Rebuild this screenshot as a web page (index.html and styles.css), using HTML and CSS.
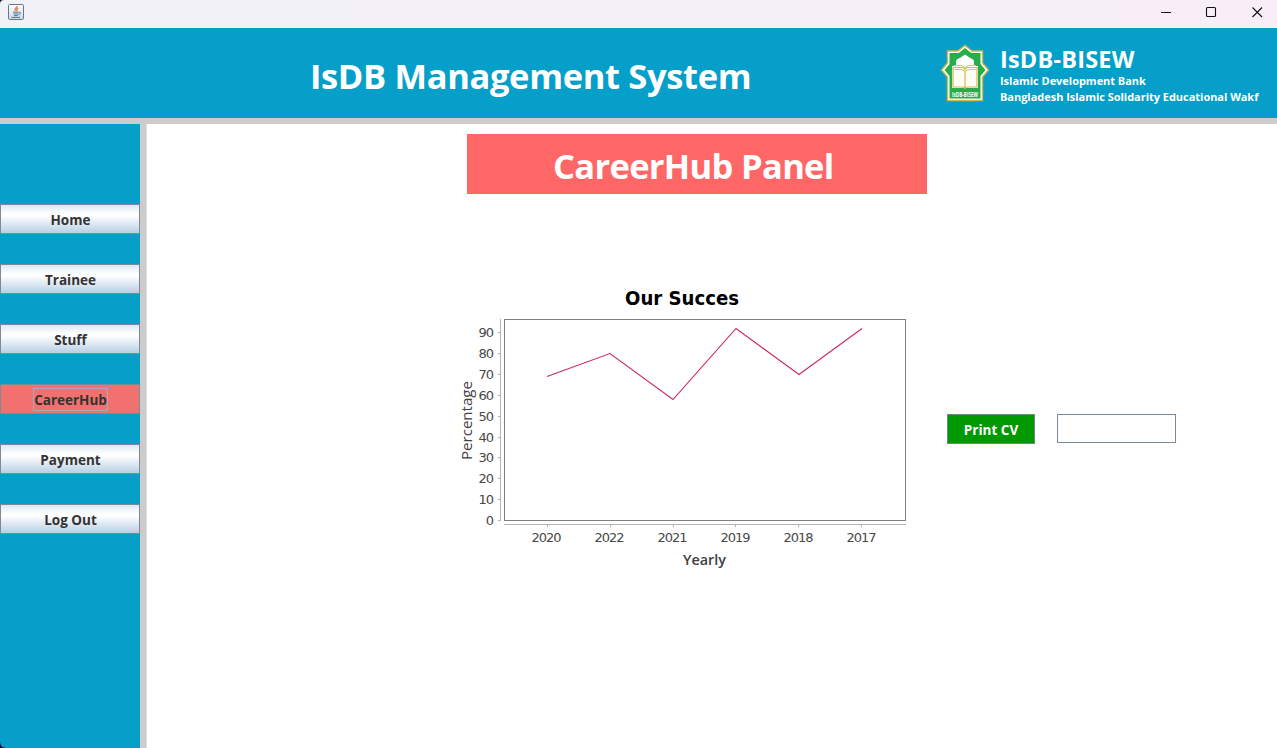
FILE: index.html
```html
<!DOCTYPE html>
<html lang="en">
<head>
<meta charset="utf-8">
<title>IsDB Management System</title>
<link rel="stylesheet" href="styles.css">
</head>
<body>
<div class="titlebar">
  <svg class="java" width="16" height="16" viewBox="0 0 16 16">
    <defs><linearGradient id="tile" x1="0" y1="0" x2="0" y2="1"><stop offset="0" stop-color="#fff"/><stop offset="1" stop-color="#cbd8e4"/></linearGradient></defs>
    <rect x=".5" y=".5" width="15" height="15" rx="1.2" fill="url(#tile)" stroke="#65798d"/>
    <path d="M9.2 1.8C9.5 3.7 5.8 4.2 7.2 6.8M10.2 4.2C8 5.2 8.4 5.8 8.8 7.2" fill="none" stroke="#e88445" stroke-width="1.4"/>
    <path d="M5 8.2h5.8M5.5 10h4.8M6 11.6h3.8M3.5 13.4h8.5M11 8.3c2.3-.3 1.8 2-.5 2.3" fill="none" stroke="#527696" stroke-width="1"/>
  </svg>
  <svg class="controls" width="104" height="12" viewBox="0 0 104 12">
    <path d="M0 6.5h10" stroke="#111" stroke-width="1"/>
    <rect x="45.5" y="1.5" width="9" height="9" rx="1" fill="none" stroke="#111" stroke-width="1.1"/>
    <path d="M91.5 1.5l9.5 9.5M101 1.5l-9.5 9.5" stroke="#111" stroke-width="1.1"/>
  </svg>
</div>
<header class="header">
  <h1 class="title">IsDB Management System</h1>
  <svg class="logo" width="50" height="60" viewBox="0 0 50 60">
    <path d="M25 1.5L32 7H42.5V19L48.5 26L42.5 33V56.5H7.5V33L1.5 26L7.5 19V7H18Z" fill="#fff" stroke="#cdbb49" stroke-width="1.4"/>
    <path d="M25 4L31.3 9H40.5V20L45.5 26L40.5 32V54.5H9.5V32L4.5 26L9.5 20V9H18.7Z" fill="#26ae4b"/>
    <path d="M16 22V18C16 14 20 15 22 12.5L25 10.5L28 12.5C30 15 34 14 34 18V22H38V44H12V22Z" fill="#fff"/>
    <path d="M13 23.5h10l2 1.5 2-1.5h10V43H27l-2 1.2-2-1.2H13ZM25 25v19" fill="#fffef5" stroke="#d8b655" stroke-width="1.2"/>
    <path d="M14 25.5h8l3 2 3-2h8M14 21.5h8l3 2 3-2h8" fill="none" stroke="#dfc368"/>
    <text class="logo-text" x="25" y="52.5" text-anchor="middle" textLength="26" lengthAdjust="spacingAndGlyphs">IsDB-BISEW</text>
  </svg>
  <div class="brand">
    <div class="brand-name">IsDB-BISEW</div>
    <div class="brand-line bank">Islamic Development Bank</div>
    <div class="brand-line">Bangladesh Islamic Solidarity Educational Wakf</div>
  </div>
</header>
<div class="body">
  <nav class="sidebar">
    <button class="nav"><span>Home</span></button>
    <button class="nav"><span>Trainee</span></button>
    <button class="nav"><span>Stuff</span></button>
    <button class="nav active"><span>CareerHub</span></button>
    <button class="nav"><span>Payment</span></button>
    <button class="nav"><span>Log Out</span></button>
  </nav>
  <main class="main">
    <h2 class="panel-title">CareerHub Panel</h2>
    <div class="content">
      <svg class="chart" width="460" height="300" viewBox="0 0 460 300">
        <text class="chart-title" x="168" y="21" textLength="114" lengthAdjust="spacingAndGlyphs">Our Succes</text>
        <rect x="47.5" y="35.5" width="401" height="201" fill="#fff" stroke="#808080"/>
        <path d="M43.5 35V237M47 240.5H449" fill="none" stroke="#b5b5b5"/>
        <path d="M41 48.5h2M41 69.5h2M41 90.5h2M41 111.5h2M41 132.5h2M41 153.5h2M41 173.5h2M41 194.5h2M41 215.5h2M41 236.5h2M90.5 241v2M153.5 241v2M216.5 241v2M278.5 241v2M341.5 241v2M404.5 241v2" stroke="#b0b0b0"/>
        <polyline points="90,92.5 153,69.5 216,115.5 279,44.5 342,90.5 405,44.5" fill="none" stroke="#cc2a5c" stroke-width="1.1"/>
        <g class="tick" text-anchor="end">
          <text x="36" y="53">90</text><text x="36" y="74">80</text><text x="36" y="95">70</text><text x="36" y="116">60</text><text x="36" y="137">50</text><text x="36" y="158">40</text><text x="36" y="178">30</text><text x="36" y="199">20</text><text x="36" y="220">10</text><text x="36" y="241">0</text>
        </g>
        <g class="tick" text-anchor="middle">
          <text x="89" y="258">2020</text><text x="152" y="258">2022</text><text x="215" y="258">2021</text><text x="278" y="258">2019</text><text x="341" y="258">2018</text><text x="404" y="258">2017</text>
        </g>
        <text class="axis" x="226" y="281" textLength="43" lengthAdjust="spacingAndGlyphs">Yearly</text>
        <text class="axis side" transform="translate(15 176) rotate(-90)" textLength="79" lengthAdjust="spacingAndGlyphs">Percentage</text>
      </svg>
      <button class="print">Print CV</button>
      <input class="field" type="text" aria-label="CV number">
    </div>
  </main>
</div>
</body>
</html>
```
FILE: styles.css
```css
* { box-sizing: border-box; }
body {
  margin: 0;
  width: 1277px;
  height: 748px;
  overflow: hidden;
  display: flex;
  flex-direction: column;
  background: #200b2d;
  font-family: "Open Sans", "Noto Sans", sans-serif;
}
.titlebar {
  height: 28px;
  flex: none;
  display: flex;
  justify-content: space-between;
  padding: 4px 12px 0 8px;
  background: linear-gradient(90deg, #f1f1f8, #f8eef8);
  border-top-left-radius: 4px;
}
.controls { margin-top: 2px; }
.header {
  height: 96px;
  flex: none;
  display: flex;
  background: #059fc9;
  border-bottom: 6px solid #ccc;
  color: #fff;
}
.title {
  flex: none;
  margin: 23px 0 0;
  padding-left: 310px;
  width: 940px;
  font-size: 34.5px;
  line-height: 50px;
  font-weight: 700;
  letter-spacing: -.35px;
  white-space: nowrap;
}
.logo { margin-top: 16px; flex: none; }
.logo-text { font: 700 7px "Open Sans", sans-serif; fill: #fff; }
.brand { padding: 16px 0 0 10px; white-space: nowrap; }
.brand-name { font-size: 23.5px; font-weight: 700; line-height: 30px; letter-spacing: .2px; }
.brand-line { font-size: 11px; font-weight: 700; line-height: 16px; letter-spacing: -.03px; }
.bank { margin-top: -1px; }
.body { flex: 1; display: flex; min-height: 0; }
.sidebar {
  width: 146px;
  padding-top: 80px;
  display: flex;
  flex-direction: column;
  gap: 30px;
  background: #059fc9;
  border-right: 6px solid #ccc;
  border-bottom-left-radius: 6px;
}
.nav {
  height: 30px;
  flex: none;
  display: flex;
  align-items: center;
  justify-content: center;
  padding: 1px 0 0 1px;
  border: 1px solid #7a8a99;
  background: linear-gradient(#dde8f3 0%, #fff 32%, #fff 38%, #b8cfe5 100%);
  color: #333;
  font: 700 13.5px "Open Sans", "Noto Sans", sans-serif;
}
.nav span { line-height: 20px; padding-top: 1px; }
.active { background: #f0716d; }
.active span { outline: 1px solid #b4a4b8; }
.main { flex: 1; background: #fff; border-left: 1px solid #d5e3ee; }
.panel-title {
  width: 460px;
  height: 60px;
  margin: 10px 0 0 320px;
  padding-left: 86px;
  background: #f66;
  color: #fff;
  font-size: 34.5px;
  font-weight: 700;
  line-height: 64px;
  letter-spacing: -.68px;
  white-space: nowrap;
}
.content { display: flex; padding: 90px 0 0 310px; }
.print {
  width: 88px;
  height: 30px;
  margin: 130px 0 0 30px;
  padding: 2px 0 0;
  border: 1px solid #6b8a80;
  background: #090;
  color: #fff;
  font: 700 13.5px "Open Sans", "Noto Sans", sans-serif;
}
.field {
  width: 119px;
  height: 29px;
  margin: 130px 0 0 22px;
  border: 1px solid #7a8a99;
  background: #fff;
}
.chart { flex: none; }
.chart-title { font: 700 20px "DejaVu Sans Condensed", "DejaVu Sans", sans-serif; fill: #000; }
.tick { font: 13px "DejaVu Sans", sans-serif; letter-spacing: -1px; fill: #484848; }
.axis { font: 600 14px "Open Sans", sans-serif; fill: #404040; }
.side { font-weight: 500; }
```
